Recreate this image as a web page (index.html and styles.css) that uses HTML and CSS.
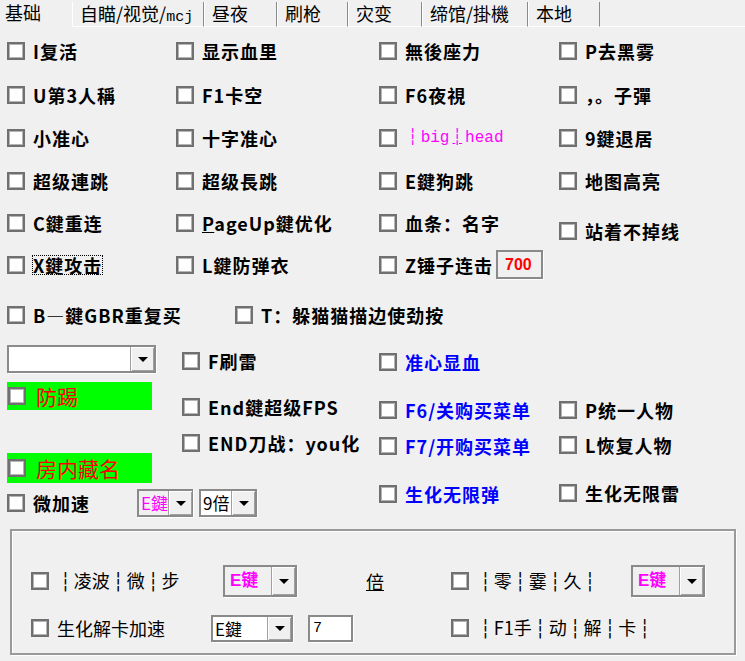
FILE: index.html
```html
<!DOCTYPE html>
<html lang="zh">
<head>
  <meta charset="UTF-8">
  <title>基础</title>
  <link rel="stylesheet" href="styles.css">
</head>
<body>
  <div class="tabs">
    <div class="tab active">基础</div>
    <div class="tab">自瞄/视觉/<span class="mono">mcj</span></div>
    <div class="tab">昼夜</div>
    <div class="tab">刷枪</div>
    <div class="tab">灾变</div>
    <div class="tab">缔馆/掛機</div>
    <div class="tab">本地</div>
    <div class="tab-fill"></div>
  </div>

  <div class="grid-top">
    <label class="chk"><span class="box"></span>I复活</label>
    <label class="chk"><span class="box"></span>显示血里</label>
    <label class="chk"><span class="box"></span>無後座力</label>
    <label class="chk"><span class="box"></span>P去黑雾</label>

    <label class="chk"><span class="box"></span>U第3人稱</label>
    <label class="chk"><span class="box"></span>F1卡空</label>
    <label class="chk"><span class="box"></span>F6夜視</label>
    <label class="chk"><span class="box"></span>，。子彈</label>

    <label class="chk"><span class="box"></span>小准心</label>
    <label class="chk"><span class="box"></span>十字准心</label>
    <label class="chk magenta mono-label"><span class="box"></span><span><span class="sep">┆</span>big<u class="sep">┆</u>head</span></label>
    <label class="chk"><span class="box"></span>9鍵退居</label>

    <label class="chk"><span class="box"></span>超级連跳</label>
    <label class="chk"><span class="box"></span>超级長跳</label>
    <label class="chk"><span class="box"></span>E鍵狗跳</label>
    <label class="chk"><span class="box"></span>地图高亮</label>

    <label class="chk"><span class="box"></span>C鍵重连</label>
    <label class="chk"><span class="box"></span><span><u>P</u>ageUp鍵优化</span></label>
    <label class="chk"><span class="box"></span>血条：名字</label>
    <label class="chk drop"><span class="box"></span>站着不掉线</label>

    <label class="chk"><span class="box"></span><span class="focus">X鍵攻击</span></label>
    <label class="chk"><span class="box"></span>L鍵防弹衣</label>
    <div class="chk-with-input">
      <label class="chk"><span class="box"></span>Z锤子连击</label>
      <div class="field field-grey red-num">700</div>
    </div>
    <div></div>
  </div>

  <div class="row7">
    <label class="chk w-b"><span class="box"></span>B—鍵GBR重复买</label>
    <label class="chk"><span class="box"></span>T：躲猫猫描边使劲按</label>
  </div>

  <div class="lower">
    <div class="col col1">
      <div class="combo combo-empty"><span class="combo-text"></span><span class="combo-btn"></span></div>
      <label class="green green1"><span class="box"></span>防踢</label>
      <label class="green green2"><span class="box"></span>房内藏名</label>
      <div class="speed-row">
        <label class="chk w-speed"><span class="box"></span>微加速</label>
        <div class="combo combo-e grey"><span class="combo-text magenta">E鍵</span><span class="combo-btn"></span></div>
        <div class="combo combo-9"><span class="combo-text plain">9倍</span><span class="combo-btn"></span></div>
      </div>
    </div>
    <div class="col col2">
      <label class="chk mt7"><span class="box"></span>F刷雷</label>
      <label class="chk mt28"><span class="box"></span>End鍵超级FPS</label>
      <label class="chk mt18"><span class="box"></span>END刀战：you化</label>
    </div>
    <div class="col col3">
      <label class="chk blue mt8"><span class="box"></span>准心显血</label>
      <label class="chk blue mt30"><span class="box"></span>F6/关购买菜单</label>
      <label class="chk blue mt18"><span class="box"></span>F7/开购买菜单</label>
      <label class="chk blue mt30"><span class="box"></span>生化无限弹</label>
    </div>
    <div class="col col4">
      <label class="chk mt56"><span class="box"></span>P统一人物</label>
      <label class="chk mt17"><span class="box"></span>L恢复人物</label>
      <label class="chk mt30"><span class="box"></span>生化无限雷</label>
    </div>
  </div>

  <div class="group">
    <div class="group-row first">
      <label class="chk thin"><span class="box"></span><span><span class="sep">┆</span>凌波<span class="sep">┆</span>微<span class="sep">┆</span>步</span></label>
      <div class="group-mid">
        <div class="combo combo-g1 grey"><span class="combo-text magenta sans-bold">E键</span><span class="combo-btn"></span></div>
        <span class="times"><u>倍</u></span>
      </div>
      <div class="group-right">
        <label class="chk thin w-right"><span class="box"></span><span><span class="sep">┆</span>零<span class="sep">┆</span>霎<span class="sep">┆</span>久<span class="sep">┆</span></span></label>
        <div class="combo combo-g1 grey"><span class="combo-text magenta sans-bold">E键</span><span class="combo-btn"></span></div>
      </div>
    </div>
    <div class="group-row second">
      <label class="chk thin"><span class="box"></span>生化解卡加速</label>
      <div class="group-mid">
        <div class="combo combo-g2"><span class="combo-text plain">E鍵</span><span class="combo-btn"></span></div>
        <div class="field field-white">7</div>
      </div>
      <div class="group-right">
        <label class="chk thin"><span class="box"></span><span><span class="sep">┆</span>F1手<span class="sep">┆</span>动<span class="sep">┆</span>解<span class="sep">┆</span>卡<span class="sep">┆</span></span></label>
      </div>
    </div>
  </div>
</body>
</html>
```

FILE: styles.css
```css
body {
  margin: 0;
  width: 745px;
  height: 661px;
  overflow: hidden;
  background: #f0f0f0;
  color: #000;
  font-family: "Noto Sans CJK SC", sans-serif;
}
.mono {
  font-family: "Liberation Mono", monospace;
  font-size: 15px;
}
.sep {
  font-family: "DejaVu Sans Mono", monospace;
  font-weight: 400;
  color: inherit;
  padding: 0 3px;
}

/* tab strip */
.tabs {
  display: flex;
  height: 27px;
}
.tab {
  box-sizing: border-box;
  height: 25px;
  margin-top: 2px;
  padding-left: 7px;
  font-size: 18px;
  line-height: 22px;
  white-space: nowrap;
  border-left: 1px solid #fff;
  border-right: 1px solid #8a8a8a;
  border-bottom: 1px solid #fff;
}
.tab.active {
  height: 27px;
  margin-top: 0;
  padding-left: 5px;
  line-height: 24px;
  border: none;
}
.tab:nth-child(1) { width: 72px; }
.tab:nth-child(2) { width: 132px; }
.tab:nth-child(3) { width: 73px; }
.tab:nth-child(4) { width: 71px; }
.tab:nth-child(5) { width: 74px; }
.tab:nth-child(6) { width: 106px; }
.tab:nth-child(7) { width: 72px; }
.tab-fill {
  flex: 1;
  border-bottom: 1px solid #fff;
}

/* checkbox rows */
.chk {
  display: flex;
  align-items: center;
  gap: 8px;
  height: 18px;
  font-size: 18px;
  line-height: 18px;
  font-weight: 700;
  letter-spacing: 1px;
  white-space: nowrap;
}
.chk.thin {
  font-weight: 400;
  letter-spacing: 0;
}
.box {
  flex: none;
  box-sizing: border-box;
  width: 18px;
  height: 18px;
  background: #fff;
  border: 2px solid #707070;
  box-shadow: inset 0 0 0 1px #b4b4b4;
}
.magenta { color: #ff00ff; }
.blue { color: #0000ff; }
.mono-label {
  font-family: "Liberation Mono", monospace;
  font-weight: 400;
  font-size: 16px;
  letter-spacing: 0;
}
.focus {
  outline: 1px dotted #000;
  outline-offset: 0;
}

.grid-top {
  display: grid;
  grid-template-columns: 169px 203px 180px 1fr;
  grid-template-rows: 44px 43px 43px 43px 42px 41px;
  align-items: center;
  margin-top: 2px;
  padding-left: 7px;
}
.drop { margin-top: 16px; }
.chk-with-input {
  display: flex;
  align-items: center;
  gap: 3px;
}

/* edit fields */
.field {
  box-sizing: border-box;
  border: 2px solid #8a8a8a;
  box-shadow: 1px 1px 0 #fff;
  font-family: "Liberation Sans", sans-serif;
}
.field-grey { background: #f0f0f0; }
.field-white { background: #fff; }
.red-num {
  width: 47px;
  height: 29px;
  padding-left: 7px;
  color: #ff0000;
  font-weight: 700;
  font-size: 16px;
  line-height: 25px;
}
.field-white {
  width: 45px;
  height: 27px;
  margin-left: 15px;
  padding-left: 3px;
  font-family: "Liberation Mono", monospace;
  font-size: 15px;
  line-height: 23px;
}

.row7 {
  display: flex;
  margin-top: 21px;
  padding-left: 7px;
}
.w-b { width: 228px; }

/* lower area */
.lower {
  display: flex;
  margin-top: 21px;
  padding-left: 7px;
}
.col {
  display: flex;
  flex-direction: column;
}
.col1 { width: 175px; }
.col2 { width: 197px; }
.col3 { width: 180px; }
.mt7 { margin-top: 7px; }
.mt8 { margin-top: 8px; }
.mt17 { margin-top: 17px; }
.mt18 { margin-top: 18px; }
.mt28 { margin-top: 28px; }
.mt30 { margin-top: 30px; }
.mt56 { margin-top: 56px; }

.combo {
  display: flex;
  box-sizing: border-box;
  background: #fff;
  border: 2px solid #8a8a8a;
  box-shadow: 1px 1px 0 #fff;
}
.combo.grey { background: #f0f0f0; }
.combo-text {
  flex: 1;
  padding-left: 2px;
  font-size: 17px;
  white-space: nowrap;
}
.combo-text.plain { color: #000; }
.sans-bold {
  font-family: "Liberation Sans", "Noto Sans CJK SC", sans-serif;
  font-weight: 700;
  padding-left: 5px;
}
.combo-btn {
  position: relative;
  flex: none;
  width: 24px;
  box-sizing: border-box;
  background: #f0f0f0;
  border-left: 1px solid #a0a0a0;
  box-shadow: inset 1px 1px 0 #fff, inset -1px -1px 0 #a0a0a0;
}
.combo-btn::after {
  content: "";
  position: absolute;
  left: 50%;
  top: 50%;
  margin: -2px 0 0 -5px;
  border-left: 5px solid transparent;
  border-right: 5px solid transparent;
  border-top: 5px solid #000;
}
.combo-empty {
  width: 149px;
  height: 28px;
}
.combo-e, .combo-9 {
  height: 28px;
  line-height: 24px;
}
.combo-e { width: 56px; margin-left: 47px; }
.combo-9 { width: 58px; margin-left: 6px; }

.green {
  display: flex;
  align-items: center;
  gap: 10px;
  width: 145px;
  box-sizing: border-box;
  padding-left: 1px;
  background: #00ff00;
  color: #ff0000;
  font-size: 21px;
}
.green1 { height: 28px; margin-top: 9px; }
.green2 { height: 30px; margin-top: 43px; }
.speed-row {
  display: flex;
  align-items: center;
  width: max-content;
  height: 28px;
  margin-top: 6px;
}
.w-speed { width: 83px; }

/* group box */
.group {
  box-sizing: border-box;
  width: 726px;
  height: 126px;
  margin: 12px 0 0 10px;
  padding: 34px 0 0 19px;
  border: 2px solid #9a9a9a;
  box-shadow: inset 1px 1px 0 #fff, 1px 1px 0 #fff;
}
.group-row {
  display: grid;
  grid-template-columns: 180px 240px 1fr;
  align-items: center;
  height: 32px;
}
.group-row.second {
  height: 28px;
  margin-top: 17px;
}
.group-mid {
  display: flex;
  align-items: center;
}
.group-right {
  display: flex;
  align-items: center;
}
.w-right { width: 180px; }
.combo-g1 {
  width: 74px;
  height: 32px;
  line-height: 28px;
}
.first .group-mid .combo-g1 { margin-left: 12px; }
.times {
  margin-left: 69px;
  font-size: 18px;
}
.combo-g2 {
  width: 82px;
  height: 27px;
  line-height: 23px;
}
```
